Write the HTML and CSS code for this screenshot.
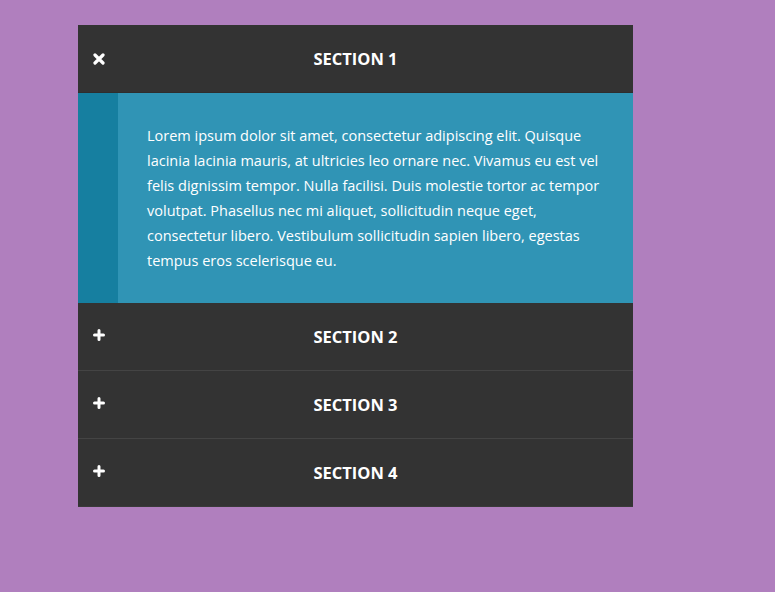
FILE: index.html
```html
<!DOCTYPE html>
<html lang="en">
<head>
<meta charset="utf-8">
<title>Accordion</title>
<link rel="stylesheet" href="styles.css">
</head>
<body>
<div class="accordion">
  <div class="section open">
    <div class="header">
      <svg class="icon" width="12" height="12" viewBox="0 0 12 12"><path d="M2 2 L10 10 M10 2 L2 10" stroke="#fff" stroke-width="3.2" stroke-linecap="round"/></svg>
      <span class="title">SECTION 1</span>
    </div>
    <div class="content">
      <div class="bar"></div>
      <p class="text">Lorem ipsum dolor sit amet, consectetur adipiscing elit. Quisque lacinia lacinia mauris, at ultricies leo ornare nec. Vivamus eu est vel felis dignissim tempor. Nulla facilisi. Duis molestie tortor ac tempor volutpat. Phasellus nec mi aliquet, sollicitudin neque eget, consectetur libero. Vestibulum sollicitudin sapien libero, egestas tempus eros scelerisque eu.</p>
    </div>
  </div>
  <div class="section">
    <div class="header">
      <svg class="icon" width="12" height="12" viewBox="0 0 12 12"><path d="M6 1.5 V10.5 M1.5 6 H10.5" stroke="#fff" stroke-width="3" stroke-linecap="round"/></svg>
      <span class="title">SECTION 2</span>
    </div>
  </div>
  <div class="section">
    <div class="header">
      <svg class="icon" width="12" height="12" viewBox="0 0 12 12"><path d="M6 1.5 V10.5 M1.5 6 H10.5" stroke="#fff" stroke-width="3" stroke-linecap="round"/></svg>
      <span class="title">SECTION 3</span>
    </div>
  </div>
  <div class="section">
    <div class="header">
      <svg class="icon" width="12" height="12" viewBox="0 0 12 12"><path d="M6 1.5 V10.5 M1.5 6 H10.5" stroke="#fff" stroke-width="3" stroke-linecap="round"/></svg>
      <span class="title">SECTION 4</span>
    </div>
  </div>
</div>
</body>
</html>
```
FILE: styles.css
```css
html, body {
  margin: 0;
  padding: 0;
}
body {
  background: #b07fbe;
  font-family: "Open Sans", "Noto Sans", sans-serif;
  min-height: 592px;
  padding: 25px 0 0 78px;
  box-sizing: border-box;
}
.accordion {
  width: 555px;
  background: #333333;
}
.header {
  height: 67px;
  display: flex;
  align-items: center;
  justify-content: center;
  position: relative;
  color: #fff;
  border-bottom: 1px solid #444444;
}
.open .header {
  border-bottom-color: #2e2e2e;
}
.section:last-child .header {
  border-bottom-color: #3a3a3a;
}
.icon {
  position: absolute;
  left: 15px;
  top: 28px;
}
.section:not(.open) .icon {
  top: 26px;
}
.title {
  font-weight: 700;
  font-size: 16.5px;
}
.content {
  display: flex;
  background: #3094b5;
  height: 210px;
}
.bar {
  width: 40px;
  flex: none;
  background: #167fa0;
}
.text {
  margin: 0;
  padding: 30px 30px 0 29px;
  color: #fff;
  font-size: 14.5px;
  line-height: 25px;
}
```
